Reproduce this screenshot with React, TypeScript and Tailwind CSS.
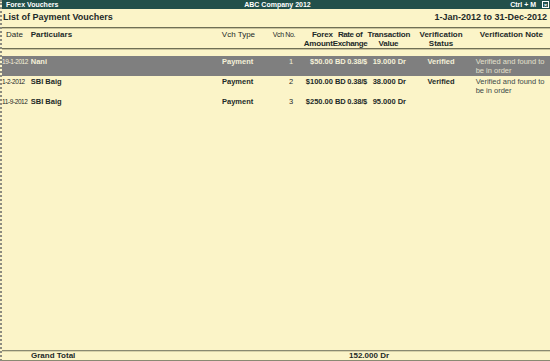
const rows = [
  {
    date: "19-1-2012",
    name: "Nani",
    type: "Payment",
    no: "1",
    amount: "$50.00",
    rate: "BD 0.38/$",
    value: "19.000 Dr",
    status: "Verified",
    note: "Verified and found to be in order",
    selected: true,
  },
  {
    date: "1-2-2012",
    name: "SBI Baig",
    type: "Payment",
    no: "2",
    amount: "$100.00",
    rate: "BD 0.38/$",
    value: "38.000 Dr",
    status: "Verified",
    note: "Verified and found to be in order",
    selected: false,
  },
  {
    date: "11-9-2012",
    name: "SBI Baig",
    type: "Payment",
    no: "3",
    amount: "$250.00",
    rate: "BD 0.38/$",
    value: "95.000 Dr",
    status: "",
    note: "",
    selected: false,
  },
];

export default function App() {
  return (
    <div
      className="flex h-[361px] w-[550px] flex-col border-l-2 border-dotted border-[#8c8c80] bg-[#fbf4c8] text-[#1d2a28]"
      style={{ fontFamily: '"Liberation Sans", Arial, sans-serif' }}
    >
      {/* Title bar */}
      <div className="flex h-[9px] items-center justify-between bg-[#22504a] pl-[4px] pr-[1px] text-[7px] font-bold leading-none text-white">
        <span className="w-[200px]">Forex Vouchers</span>
        <span>ABC Company 2012</span>
        <div className="flex w-[200px] items-center justify-end gap-[6px]">
          <span>Ctrl + M</span>
          <span className="flex h-[7px] w-[7px] items-center justify-center border border-white text-[6px]">
            ×
          </span>
        </div>
      </div>

      {/* Report heading */}
      <div className="flex h-[17px] items-center justify-between pl-[1px] pr-[3px] text-[9px] font-bold">
        <span>List of Payment Vouchers</span>
        <span>1-Jan-2012 to 31-Dec-2012</span>
      </div>

      <div className="mt-[1px] h-[2px] border-t border-[#6f6f55] bg-[#c9c39c]" />

      {/* Column headers */}
      <div className="flex h-[19px] whitespace-nowrap pt-[1px] text-[8px] leading-[9px]">
        <div className="w-[29px] pl-[4px] font-normal">Date</div>
        <div className="w-[193px] font-bold">Particulars</div>
        <div className="w-[50px] font-normal">Vch Type</div>
        <div className="w-[24px] text-right text-[7px] tracking-tighter">Vch No.</div>
        <div className="w-[38px] text-right font-bold tracking-tight">
          Forex
          <br />
          Amount
        </div>
        <div className="w-[35px] text-center font-bold tracking-tighter">
          Rate of
          <br />
          Exchange
        </div>
        <div className="w-[42px] text-center font-bold tracking-tight">
          Transaction
          <br />
          Value
        </div>
        <div className="w-[64px] text-center font-bold">
          Verification
          <br />
          Status
        </div>
        <div className="w-[78px] text-center font-bold">Verification Note</div>
      </div>

      <div className="h-[2px] border-t border-[#6f6f55] bg-[#c9c39c]" />

      {/* Rows */}
      <div className="flex flex-1 flex-col pt-[6px]">
        {rows.map((row) => (
          <div
            key={row.no}
            className={`flex h-[20px] pt-[1px] text-[7.5px] leading-[9px] ${
              row.selected ? "bg-[#7f7f7f] text-[#f4f0d8]" : ""
            }`}
          >
            <div className="w-[29px] overflow-hidden whitespace-nowrap text-[6.5px] tracking-[-0.4px]">
              {row.date}
            </div>
            <div className="w-[193px] font-bold">{row.name}</div>
            <div className="w-[50px] font-bold">{row.type}</div>
            <div className="w-[24px] pr-[2px] text-right">{row.no}</div>
            <div className="w-[38px] whitespace-nowrap text-right font-bold">{row.amount}</div>
            <div className="w-[35px] whitespace-nowrap pl-[2px] font-bold tracking-tight">{row.rate}</div>
            <div className="w-[42px] whitespace-nowrap pl-[5px] font-bold">{row.value}</div>
            <div className="w-[64px] text-center font-bold">{row.status}</div>
            <div
              className={`w-[78px] pl-[3px] ${
                row.selected ? "text-[#e3e0cc]" : "text-[#3b4a48]"
              }`}
            >
              {row.note}
            </div>
          </div>
        ))}
      </div>

      {/* Footer */}
      <div className="h-[2px] border-t border-[#8a8a72] bg-[#d8d2aa]" />
      <div className="flex h-[9px] items-center border-b border-[#8a8a72] text-[8px] font-bold leading-none">
        <div className="w-[29px]" />
        <div className="w-[318px]">Grand Total</div>
        <div>152.000 Dr</div>
      </div>
    </div>
  );
}
